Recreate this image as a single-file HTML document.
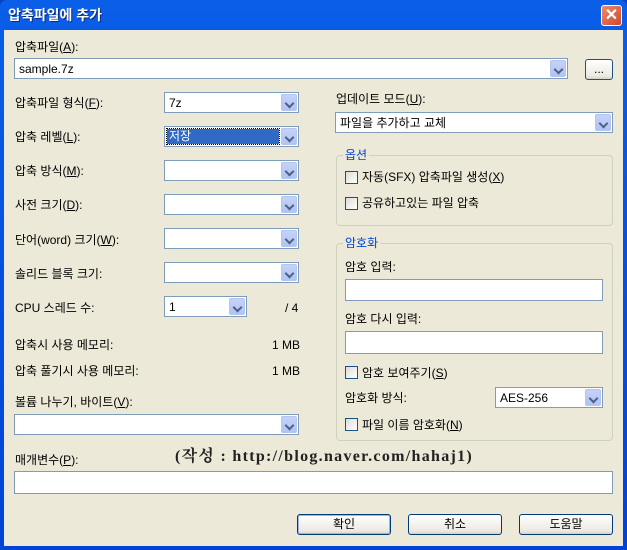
<!DOCTYPE html>
<html><head><meta charset="utf-8"><style>
*{box-sizing:border-box;margin:0;padding:0}
body{width:627px;height:550px;overflow:hidden;background:#0842c8;font-family:"Liberation Sans","Noto Sans CJK KR","NanumGothic",sans-serif;font-size:12px;color:#000}
.win{position:absolute;left:0;top:0;width:627px;height:550px;background:linear-gradient(#0a5ee8,#0043d6);border-radius:7px 7px 0 0}
.title{position:absolute;left:8px;top:5px;color:#fff;font-size:14px;font-weight:bold;text-shadow:1px 1px #0a2a80;line-height:20px}
.close{position:absolute;left:601px;top:5px;width:21px;height:21px;background:linear-gradient(135deg,#e98d6f,#d2472a);border:1px solid #fff;border-radius:3px;color:#fff;font-weight:bold;font-size:16px;text-align:center;line-height:19px}
.body{position:absolute;left:4px;top:30px;width:619px;height:516px;background:#ece9d8}
.a{position:absolute;white-space:nowrap;line-height:14px}
.cb{position:absolute;background:#fff;border:1px solid #7f9db9;height:21px;padding-left:4px;padding-top:2px;line-height:17px}
.cb .dd{position:absolute;right:1px;top:1px;width:16px;height:17px;background:linear-gradient(#c6d3f7,#b0c4f4);border:1px solid #b4c6f0;border-radius:2px}
.cb .dd:after{content:"";position:absolute;left:4px;top:5px;width:5px;height:5px;border-right:2px solid #4d6185;border-bottom:2px solid #4d6185;transform:rotate(45deg)}
.inp{position:absolute;background:#fff;border:1px solid #7f9db9}
.btn{position:absolute;background:linear-gradient(#fff,#ece9e0 85%,#d6d0c5);border:1px solid #003c74;border-radius:3px;text-align:center;line-height:18px;height:21px}
.grp{position:absolute;border:1px solid #d0d0bf;border-radius:4px}
.grp span{position:absolute;left:6px;top:-8px;background:#ece9d8;color:#0046d5;padding:0 2px;line-height:14px}
.chk{position:absolute;width:13px;height:13px;border:1px solid #1c5180;background:linear-gradient(135deg,#dcdcd7,#fff)}
u{text-decoration:underline}
</style></head><body>
<div class="win">
<div class="title">압축파일에 추가</div>
<div class="close">✕</div>
</div>
<div class="body"></div>
<div class="a" style="left:15px;top:40px">압축파일(<u>A</u>):</div>
<div class="cb" style="left:14px;top:58px;width:554px">sample.7z<div class="dd"></div></div>
<div class="btn" style="left:585px;top:59px;width:28px;border-color:#1c5180">...</div>

<div class="a" style="left:15px;top:96px">압축파일 형식(<u>F</u>):</div>
<div class="cb" style="left:164px;top:92px;width:135px">7z<div class="dd"></div></div>
<div class="a" style="left:15px;top:130px">압축 레벨(<u>L</u>):</div>
<div class="cb" style="left:164px;top:126px;width:135px;padding-left:2px;padding-top:0"><span style="background:#316ac5;color:#fff;display:inline-block;width:112px;line-height:15px;padding-left:2px;margin-top:2px;outline:1px dotted #000">저장</span><div class="dd"></div></div>
<div class="a" style="left:15px;top:164px">압축 방식(<u>M</u>):</div>
<div class="cb" style="left:164px;top:160px;width:135px"><div class="dd"></div></div>
<div class="a" style="left:15px;top:198px">사전 크기(<u>D</u>):</div>
<div class="cb" style="left:164px;top:194px;width:135px"><div class="dd"></div></div>
<div class="a" style="left:15px;top:233px">단어(word) 크기(<u>W</u>):</div>
<div class="cb" style="left:164px;top:228px;width:135px"><div class="dd"></div></div>
<div class="a" style="left:15px;top:267px">솔리드 블록 크기:</div>
<div class="cb" style="left:164px;top:262px;width:135px"><div class="dd"></div></div>
<div class="a" style="left:15px;top:301px">CPU 스레드 수:</div>
<div class="cb" style="left:164px;top:296px;width:83px">1<div class="dd"></div></div>
<div class="a" style="left:285px;top:301px">/ 4</div>
<div class="a" style="left:15px;top:338px">압축시 사용 메모리:</div>
<div class="a" style="left:272px;top:338px">1 MB</div>
<div class="a" style="left:15px;top:364px">압축 풀기시 사용 메모리:</div>
<div class="a" style="left:272px;top:364px">1 MB</div>
<div class="a" style="left:15px;top:395px">볼륨 나누기, 바이트(<u>V</u>):</div>
<div class="cb" style="left:14px;top:414px;width:285px"><div class="dd"></div></div>

<div class="a" style="left:336px;top:92px">업데이트 모드(<u>U</u>):</div>
<div class="cb" style="left:335px;top:112px;width:278px">파일을 추가하고 교체<div class="dd"></div></div>

<div class="grp" style="left:336px;top:155px;width:277px;height:71px"><span>옵션</span></div>
<div class="chk" style="left:345px;top:171px"></div>
<div class="a" style="left:362px;top:170px">자동(SFX) 압축파일 생성(<u>X</u>)</div>
<div class="chk" style="left:345px;top:197px"></div>
<div class="a" style="left:362px;top:196px">공유하고있는 파일 압축</div>

<div class="grp" style="left:336px;top:243px;width:277px;height:198px"><span>암호화</span></div>
<div class="a" style="left:345px;top:260px">암호 입력:</div>
<div class="inp" style="left:345px;top:279px;width:258px;height:22px"></div>
<div class="a" style="left:345px;top:312px">암호 다시 입력:</div>
<div class="inp" style="left:345px;top:331px;width:258px;height:23px"></div>
<div class="chk" style="left:345px;top:366px"></div>
<div class="a" style="left:362px;top:366px">암호 보여주기(<u>S</u>)</div>
<div class="a" style="left:345px;top:391px">암호화 방식:</div>
<div class="cb" style="left:495px;top:387px;width:108px">AES-256<div class="dd"></div></div>
<div class="chk" style="left:345px;top:418px"></div>
<div class="a" style="left:362px;top:418px">파일 이름 암호화(<u>N</u>)</div>

<div class="a" style="left:15px;top:453px">매개변수(<u>P</u>):</div>
<div class="a" style="left:175px;top:448px;font-family:'Liberation Serif','Noto Serif CJK SC',serif;font-weight:bold;font-size:16px;letter-spacing:1.3px;line-height:18px;color:#222">(작성 : http://blog.naver.com/hahaj1)</div>
<div class="inp" style="left:14px;top:471px;width:599px;height:23px"></div>

<div class="btn" style="left:297px;top:514px;width:94px;box-shadow:inset 0 0 0 1px #9cb5ee">확인</div>
<div class="btn" style="left:408px;top:514px;width:94px">취소</div>
<div class="btn" style="left:519px;top:514px;width:94px">도움말</div>
</body></html>
